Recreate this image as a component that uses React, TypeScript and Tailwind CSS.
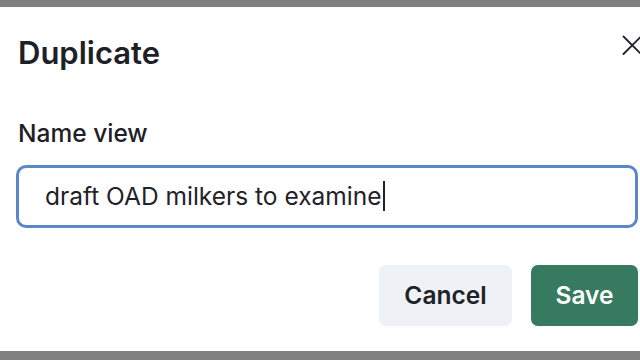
import { useState } from "react";

export default function App() {
  const [name, setName] = useState("draft OAD milkers to examine");

  return (
    <div
      className="w-[640px] h-[360px] overflow-hidden bg-[#808080] pt-[7px] pb-[9px]"
      style={{ fontFamily: "Inter, 'Noto Sans', sans-serif" }}
    >
      <div className="relative w-[654px] h-full bg-white px-4">
        {/* Close */}
        <button className="absolute left-[622px] top-[28px] w-5 h-5 text-[#1f2229]" aria-label="Close">
          <svg viewBox="0 0 20 20" className="w-5 h-5" fill="none" stroke="currentColor" strokeWidth="1.8" strokeLinecap="round">
            <path d="M1.5 1.5 L19 19 M19 1.5 L1.5 19" />
          </svg>
        </button>

        <h2 className="pt-[30px] pl-[2px] text-[31px] leading-none font-semibold text-[#1e2028]">Duplicate</h2>

        <label className="block mt-[53px] pl-[2px] text-[24.5px] leading-none font-medium text-[#1e2028]">
          Name view
        </label>

        <div className="relative mt-[19px]">
          <input
            value={name}
            onChange={(e) => setName(e.target.value)}
            className="w-full h-[63px] rounded-[10px] border-[3px] border-[#5a87c5] px-[26px] text-[24.5px] text-[#1f2229] outline-none"
          />
          {/* caret */}
          <div className="pointer-events-none absolute inset-0 flex items-center px-[29px] text-[24.5px]">
            <span className="invisible whitespace-pre">{name}</span>
            <span className="ml-[2px] w-[2px] h-[30px] bg-[#1f2229]" />
          </div>
        </div>

        {/* Actions */}
        <div className="flex justify-end gap-[19px] mt-[37px]">
          <button className="w-[133px] h-[61px] rounded-[7px] bg-[#eef1f6] text-[24.5px] font-semibold text-[#1f2229]">
            Cancel
          </button>
          <button className="w-[107px] h-[61px] rounded-[7px] bg-[#367a5f] text-[24.5px] font-semibold text-white">
            Save
          </button>
        </div>
      </div>
    </div>
  );
}
